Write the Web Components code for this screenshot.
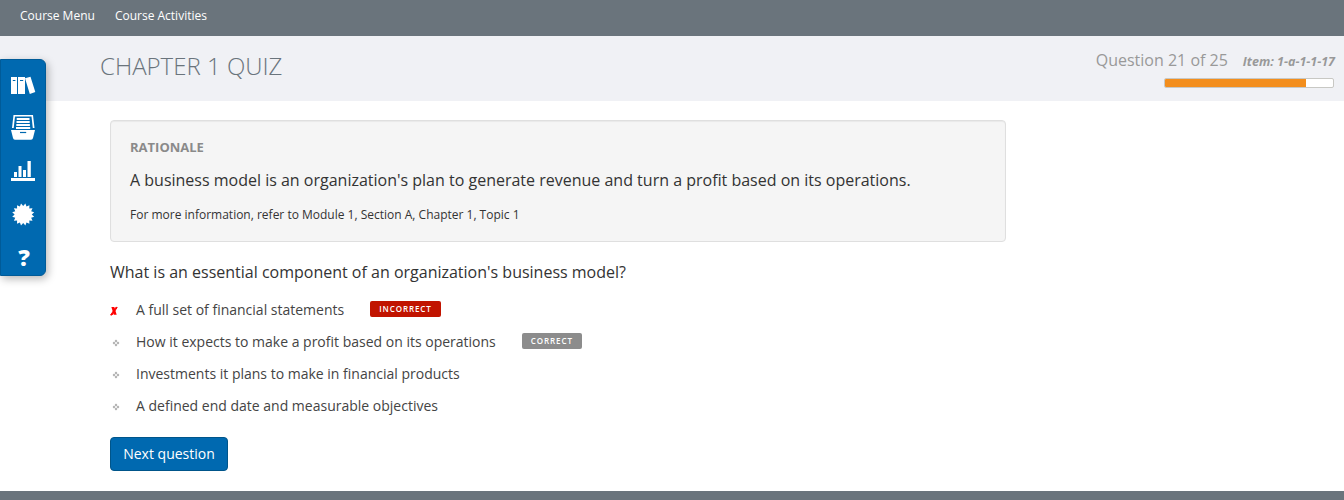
<!DOCTYPE html>
<html lang="en"><head><meta charset="utf-8"><title>Chapter 1 Quiz</title>
<style>html,body{margin:0;height:100%;overflow:hidden}body{font-family:"Open Sans",sans-serif;background:#fff;color:#333}</style></head>
<body><quiz-app></quiz-app>
<script>
function define(name, html, upgrade) {
  customElements.define(name, class extends HTMLElement {
    connectedCallback() {
      if (this.shadowRoot) return;
      this.attachShadow({mode: 'open'}).innerHTML = html;
      if (upgrade) upgrade(this, this.shadowRoot);
    }
  });
}
define('top-nav', `<style>:host{display:flex;gap:20px;height:36px;padding-left:20px;background:#6a747c;color:#fff;font-size:12px;line-height:32px;box-sizing:border-box}</style><span>Course Menu</span><span>Course Activities</span>`);
define('progress-bar', `<style>:host{display:block;box-sizing:border-box;width:170px;height:10px;border:1px solid #c8c8c4;border-radius:2px;background:#fff;overflow:hidden}div{height:100%;background:#f38e1d}</style><div></div>`,
  (el, root) => root.querySelector('div').style.width = el.getAttribute('value') + '%');
define('quiz-header', `<style>:host{display:flex;justify-content:space-between;box-sizing:border-box;height:65px;background:#f0f1f5;padding:0 9px 0 100px}
h1{margin:0;font-size:24px;font-weight:300;line-height:60px;color:#6a747c;white-space:nowrap}
.status{display:flex;flex-direction:column;align-items:flex-end;color:#999;padding-top:12px}
.line{display:flex;gap:15px;align-items:baseline;height:24px;line-height:24px;font-size:16px;white-space:nowrap}
em{font-size:12.5px;font-weight:700}progress-bar{margin:6px 1px 0 0}</style>
<h1>CHAPTER 1 QUIZ</h1><div class="status"><div class="line"><span>Question 21 of 25</span><em>Item: 1-a-1-1-17</em></div><progress-bar value="84"></progress-bar></div>`);
define('rationale-card', `<style>:host{display:block;box-sizing:border-box;width:896px;height:122px;padding:16px 19px;background:#f5f5f5;border:1px solid #dfdfdf;border-radius:4px;box-shadow:inset 0 1px 1px rgba(0,0,0,.05)}
h2{margin:0;font-size:13px;line-height:20px;font-weight:700;color:#8a8a8a}.text{font-size:16px;line-height:24px;margin-top:11px}.ref{font-size:12px;line-height:18px;margin-top:14px}</style>
<h2>RATIONALE</h2><div class="text"><slot name="text"></slot></div><div class="ref"><slot name="reference"></slot></div>`);
define('result-badge', `<style>:host{display:block;box-sizing:border-box;height:16px;border-radius:2px;padding:0 9px;background:#8c8c8c;color:#fff;font-size:8px;line-height:16px;font-weight:600;letter-spacing:.92px;margin-left:26px;white-space:nowrap}:host([wrong]){background:#c11400}</style><slot></slot>`);
define('answer-row', `<style>:host{display:flex;height:32px;align-items:center;font-size:14px;color:#444}
.mark{width:26px;height:8px;flex:none}svg{display:block;margin-top:1px}::slotted(result-badge){margin-top:-1px}</style><span class="mark"></span><span><slot></slot></span><slot name="badge"></slot>`,
  (el, root) => root.querySelector('.mark').innerHTML = el.hasAttribute('wrong')
    ? '<svg width="12" height="12"><path d="M.6 9 L2 9 L7.200 1.400 L5.800 1.400Z" fill="#f00" stroke="#f00" stroke-width="1"/><path d="M1.400 1h2.900l2.400 7.800H3.700Z" fill="#f00"/></svg>'
    : '<svg width="12" height="12"><path d="M6 1.600L7.400 3 6 4.400 4.600 3zM6 5.600L7.400 7 6 8.400 4.600 7zM4 3.600L5.400 5 4 6.400 2.600 5zM8 3.600L9.400 5 8 6.400 6.600 5z" fill="#aaa"/></svg>');
define('next-button', `<style>:host{display:block}button{display:block;box-sizing:border-box;width:118px;height:34px;padding:0;border:1px solid #00558a;border-radius:4px;background:#0069b0;color:#fff;font:14px/30px "Open Sans",sans-serif}</style><button><slot></slot></button>`);
define('side-tools', `<style>:host{position:absolute;left:0;top:59px;display:flex;flex-direction:column;box-sizing:border-box;width:46px;height:217px;background:#0069b0;border:1px solid #005b98;border-radius:0 6px 6px 0;box-shadow:2px 3px 8px rgba(0,0,0,.28)}svg{display:block;fill:#fff}
.help{position:absolute;left:15px;top:182px;width:16px;height:30px;color:#fff;font:800 23px/30px "Open Sans",sans-serif;text-align:center}</style>
<svg width="44" height="215" viewBox="1 60 44 215">
<path d="M11 77h6v17h-6zM18 77h7v17h-7zM25 78.200l5.500-1.500 4.800 15.300-5.500 2z"/><path d="M12.800 80.500h2.600M20 80.500h3.200" stroke="#0069b0"/>
<path d="M13.500 115h19.500l1.500 13h-1.700l-1.300-11.400H15l-1.300 11.400H12z"/><path d="M16.700 119h12.800M16.500 122h13.200M16.300 125h13.600M16 128h14.200" stroke="#fff" stroke-width="1.900"/><path d="M11 130h24l-2 8q-.3 1.700-2 1.700H15q-1.700 0-2-1.700z"/><path d="M20 132.500h6.200" fill="none" stroke="#0069b0" stroke-width="1.200"/>
<path d="M11 178h24v3H11zM14 172h3v5h-3zM18.500 166h3v11h-3zM23 170h3v7h-3zM27.500 161h3.300v16h-3.300z"/>
<polygon id="seal"/>
</svg><span class="help">?</span>`,
  (el, root) => {
    const points = [];
    for (let i = 0; i < 32; i++) {
      const r = i % 2 ? 8.6 : 11.2, a = Math.PI * (i + 1) / 16;
      points.push((23.2 + r * Math.sin(a)).toFixed(2) + ',' + (214.5 - r * Math.cos(a)).toFixed(2));
    }
    root.querySelector('#seal').setAttribute('points', points.join(' '));
  });
define('quiz-app', `<style>:host{display:flex;flex-direction:column;height:500px;position:relative;background:#fff;overflow:hidden}
main{padding:19px 0 0 110px;height:390px;box-sizing:border-box}.question{font-size:16px;line-height:24px;margin:18px 0 9px}next-button{margin-top:16px}footer{height:9px;background:#6a747c}</style>
<top-nav></top-nav><quiz-header></quiz-header>
<main><rationale-card><span slot="text">A business model is an organization's plan to generate revenue and turn a profit based on its operations.</span><span slot="reference">For more information, refer to Module 1, Section A, Chapter 1, Topic 1</span></rationale-card>
<div class="question">What is an essential component of an organization's business model?</div>
<answer-row wrong>A full set of financial statements<result-badge wrong slot="badge">INCORRECT</result-badge></answer-row>
<answer-row>How it expects to make a profit based on its operations<result-badge slot="badge">CORRECT</result-badge></answer-row>
<answer-row>Investments it plans to make in financial products</answer-row>
<answer-row>A defined end date and measurable objectives</answer-row>
<next-button>Next question</next-button></main><footer></footer><side-tools></side-tools>`);
</script></body></html>
